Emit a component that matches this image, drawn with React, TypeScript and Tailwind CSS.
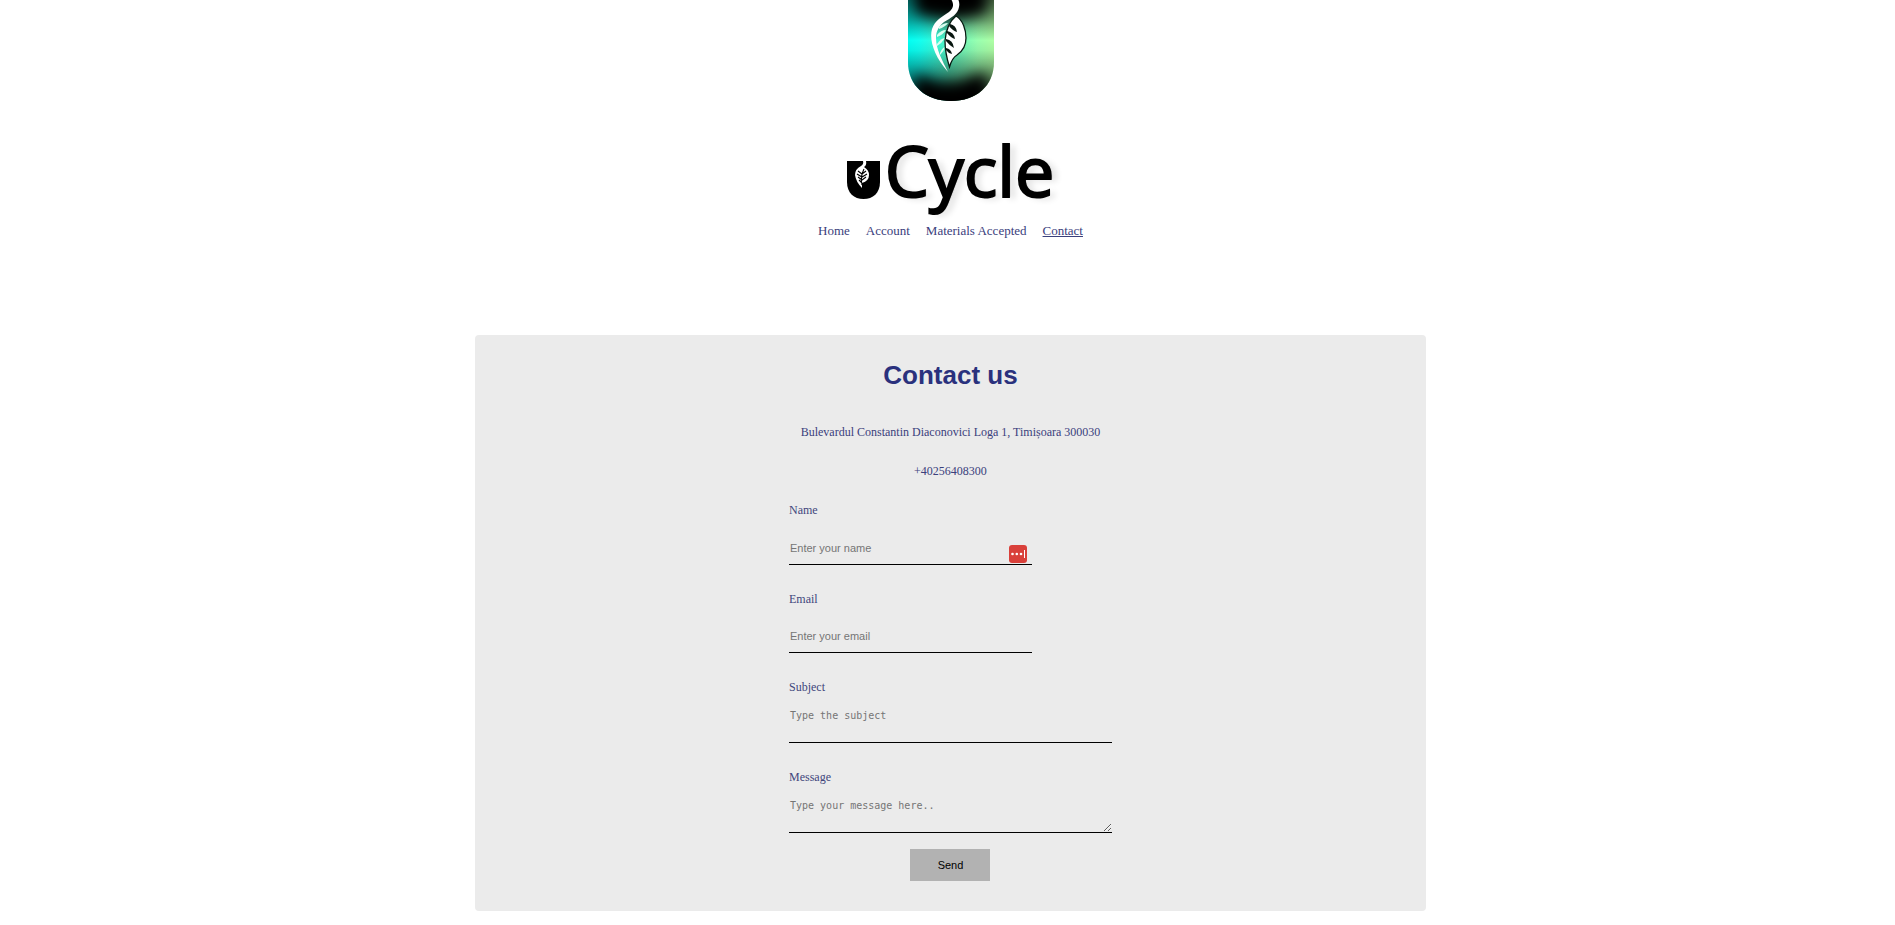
const links = ['Home', 'Account', 'Materials Accepted', 'Contact'];

function LogoMark() {
  return (
    <svg className="h-[101px] w-[88px]" viewBox="0 0 88 101" aria-label="uCycle emblem" role="img">
      <defs>
        <linearGradient id="hue" x1="0" x2="1" y1="0" y2="0">
          <stop offset="0" stopColor="#00fff4" />
          <stop offset=".15" stopColor="#14fff0" />
          <stop offset=".5" stopColor="#5cf4c0" />
          <stop offset=".8" stopColor="#98ffb0" />
          <stop offset="1" stopColor="#b0ffa4" />
        </linearGradient>
        <linearGradient id="shade" x1="0" x2="0" y1="0" y2="1">
          <stop offset="0" stopColor="#000" stopOpacity=".6" />
          <stop offset=".2" stopColor="#000" stopOpacity=".35" />
          <stop offset=".4" stopColor="#000" stopOpacity="0" />
          <stop offset=".5" stopColor="#000" stopOpacity=".06" />
          <stop offset=".75" stopColor="#000" stopOpacity=".45" />
          <stop offset="1" stopColor="#000" stopOpacity=".9" />
        </linearGradient>
        <filter id="soft" x="-40%" y="-40%" width="180%" height="180%">
          <feGaussianBlur stdDeviation="7" />
        </filter>
        <clipPath id="shield">
          <path d="M1-2H87V62C87 86 69 101 44 101S1 86 1 62Z" />
        </clipPath>
      </defs>
      <g clipPath="url(#shield)">
        <rect width="88" height="101" fill="url(#hue)" />
        <rect width="88" height="101" fill="url(#shade)" />
        <g filter="url(#soft)">
          <path d="M8-20H80V12Q66 18 44 19Q22 18 8 12Z" fill="#000" />
          <path d="M8 76Q18 76 26 82Q44 88 60 80Q70 73 80 75V120H8Z" fill="#000" />
        </g>
        <path d="M44-1C47 4 47 8 42 12C35 17 28 20 25 29C22 40 27 56 41 72C35 60 29 49 29 38C29 31 32 26 37 22C44 18 51 14 52 7Q53 3 51-1Z" fill="#fff" />
        <g fill="#d8fff0">
          <path d="M32 27Q36 23 41 23Q38 27 32 29Z" />
          <path d="M30 35Q34 30 39 30Q36 35 30 37Z" />
          <path d="M30 44Q34 38 38 38Q35 43 30 46Z" />
          <path d="M33 53Q35 48 38 47Q37 51 33 55Z" />
        </g>
        <path d="M49 16C56 20 59 30 59 38C59 46 56 51 50 55Q45 58 42.500 67C39 56 38 48 38 41C39 28 44 20 49 16Z" fill="#fff" stroke="#071b12" strokeWidth="1.300" />
        <g fill="#07150f">
          <path d="M43 24Q49 25 50 32Q46 31 42 26Z" />
          <path d="M40 31Q47 32 48 39Q44 38 40 33Z" />
          <path d="M39 39Q46 40 47 48Q42 45 39 41Z" />
          <path d="M39 48Q44 49 45 54Q41 53 39 50Z" />
        </g>
      </g>
    </svg>
  );
}

function SmallMark() {
  return (
    <svg className="mt-5 h-[38px] w-[33px]" viewBox="0 0 33 38" aria-hidden="true">
      <path d="M0 0H33V21C33 32 26 38 16.500 38S0 32 0 21Z" fill="#000" />
      <path d="M16 0Q17 3 14 5Q8 8 8 14Q9 21 15 27L15 22Q22 20 22 14Q22 9 17 6Q20 4 19 0Z" fill="#fff" />
      <path d="M17 8Q13 16 15 24M11 10L15 13L19 10M10 13L15 16L20 13M11 16L15 19L19 16M12 19L15 22" fill="none" stroke="#000" strokeWidth="1.100" />
    </svg>
  );
}

const labelClass = 'text-xs leading-4 text-[#41467c]';
const fieldClass =
  'block border-b border-black bg-transparent px-px outline-none placeholder:text-[#757575]';
const inputClass = `${fieldClass} h-[34px] w-full font-['Liberation_Sans',sans-serif] text-[11px]`;
const areaClass = `${fieldClass} mt-2 h-10 w-full py-[5px] font-['DejaVu_Sans_Mono',monospace] text-[10px]`;

export default function App() {
  return (
    <div className="bg-white pl-[6px] font-['Liberation_Serif',serif] text-[#3a407c]">
      <header className="flex flex-col items-center">
        <LogoMark />
        <div className="mt-[25px] flex h-[88px] items-center gap-[5px]">
          <SmallMark />
          <span className="font-['Open_Sans',sans-serif] text-[70px] leading-[88px] font-medium text-black [-webkit-text-stroke:2px_black] [text-shadow:1px_0_1px_rgba(0,0,0,0.5),6px_2px_6px_rgba(0,0,0,0.12)]">
            Cycle
          </span>
        </div>
        <nav className="mt-[7px] flex gap-4 text-[13px] leading-5">
          {links.map((link) => (
            <a key={link} href="#" className={link === 'Contact' ? 'underline' : ''}>
              {link}
            </a>
          ))}
        </nav>
      </header>

      <main className="mx-auto mt-[94px] mb-[14px] w-[50.35%] rounded bg-[#ebebeb] pt-6 pb-[30px]">
        <h1 className="text-center font-['Liberation_Sans',sans-serif] text-[26px] leading-8 font-bold text-[#2a317d]">
          Contact us
        </h1>
        <p className="mt-[33px] text-center text-xs leading-4">
          Bulevardul Constantin Diaconovici Loga 1, Timișoara 300030
        </p>
        <p className="mt-[23px] text-center text-xs leading-4">+40256408300</p>

        <form className="mx-auto mt-[23px] flex w-[323px] flex-col">
          <label htmlFor="name" className={labelClass}>Name</label>
          <div className="relative mt-[13px] w-[243px]">
            <input id="name" type="text" placeholder="Enter your name" className={inputClass} />
            <svg className="absolute right-[5px] bottom-[2px] h-[18px] w-[18px]" viewBox="0 0 18 18" aria-hidden="true">
              <rect width="18" height="18" rx="3" fill="#d9403a" />
              <g fill="#fff">
                <circle cx="3.500" cy="9" r="1.300" />
                <circle cx="7.800" cy="9" r="1.300" />
                <circle cx="12" cy="9" r="1.300" />
                <rect x="15" y="5" width="1" height="8" />
              </g>
            </svg>
          </div>

          <label htmlFor="email" className={`${labelClass} mt-[26px]`}>Email</label>
          <div className="mt-3 w-[243px]">
            <input id="email" type="email" placeholder="Enter your email" className={inputClass} />
          </div>

          <label htmlFor="subject" className={`${labelClass} mt-[26px]`}>Subject</label>
          <textarea id="subject" placeholder="Type the subject" className={`${areaClass} resize-none`} />

          <label htmlFor="message" className={`${labelClass} mt-[26px]`}>Message</label>
          <textarea id="message" placeholder="Type your message here.." className={`${areaClass} resize`} />

          <button
            type="submit"
            className="mt-4 h-8 w-20 self-center bg-[#b2b2b2] font-['Liberation_Sans',sans-serif] text-[11px] text-black"
          >
            Send
          </button>
        </form>
      </main>
    </div>
  );
}
